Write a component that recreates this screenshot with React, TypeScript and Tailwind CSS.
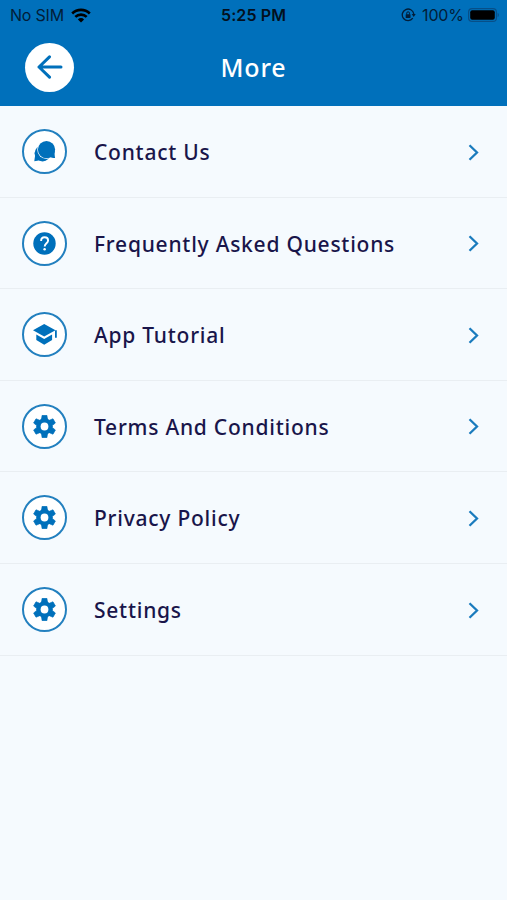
import type { ReactNode } from 'react'

interface MenuItem {
  label: string
  icon: ReactNode
}

function ChatIcon() {
  return (
    <svg width="23" height="23" viewBox="0 0 23 23" fill="currentColor">
      <circle cx="9.600" cy="13.400" r="8" />
      <path d="M1.700 12c1 3-.1 6-.4 9.200 2.200-.1 4-.6 6-1.300z" />
      <circle cx="13.500" cy="9.600" r="9.300" fill="#fff" />
      <circle cx="13.500" cy="9.600" r="8.600" />
      <path d="M22 10c-.7 2.500-.4 5.200.1 7.900-2.200 0-4-.3-6-1.200z" />
    </svg>
  )
}

function HelpIcon() {
  return (
    <svg width="23" height="23" viewBox="0 0 23 23" fill="none">
      <circle cx="11.500" cy="11.500" r="11.200" fill="currentColor" />
      <path d="M8.100 8.900C8.100 6.600 9.500 5.300 11.600 5.300s3.500 1.300 3.500 3.200c0 2.700-3.400 2.900-3.400 6" stroke="#fff" strokeWidth="1.900" />
      <circle cx="11.600" cy="17.200" r="1.250" fill="#fff" />
    </svg>
  )
}

function TutorialIcon() {
  return (
    <svg className="ml-px" width="26" height="23" viewBox="0 0 26 23" fill="currentColor">
      <path d="M12.200 1L23.500 7.300 12.200 13.500 1 7.300z" />
      <path d="M4.300 11.500l7.900 4.500 7.900-4.500v5.600l-7.900 4.600-7.900-4.600z" />
      <path d="M23.500 7.300h1.300v7.400h-1.800V7.600z" />
    </svg>
  )
}

function GearIcon() {
  return (
    <svg width="23" height="23" viewBox="0 0 23 23" fill="currentColor">
      <circle cx="11.500" cy="11.500" r="8.300" />
      {[0, 60, 120].map(angle => (
        <path
          key={angle}
          transform={`rotate(${angle} 11.5 11.5)`}
          d="M9.100 .3h4.800l.6 3.700h-6zM9.100 22.700h4.800l.6-3.700h-6z"
          stroke="currentColor"
          strokeWidth=".6"
          strokeLinejoin="round"
        />
      ))}
      <circle cx="11.500" cy="11.500" r="3.900" fill="#fff" />
    </svg>
  )
}

function WifiIcon() {
  return (
    <svg width="20" height="15" viewBox="0 0 20 15" fill="none" stroke="currentColor" strokeWidth="2.600">
      <path d="M1.200 5.500a12.600 12.600 0 0 1 17.600 0" />
      <path d="M4.300 8.900a8.200 8.200 0 0 1 11.400 0" />
      <path d="M10 14.500l-3.100-3.100a4.400 4.400 0 0 1 6.200 0z" fill="currentColor" stroke="none" />
    </svg>
  )
}

function RotationLockIcon() {
  return (
    <svg width="15" height="14" viewBox="0 0 15 14" fill="none" stroke="currentColor" strokeWidth="1.300">
      <path d="M11.800 10.200A5.800 5.800 0 1 1 12.800 6" />
      <path d="M10.700 6h4l-2 3z" fill="currentColor" stroke="none" />
      <rect x="4.700" y="6.200" width="4.800" height="3.700" rx=".5" fill="currentColor" stroke="none" />
      <path d="M5.700 6.500V5.200a1.400 1.400 0 0 1 2.800 0v1.300" strokeWidth="1" />
    </svg>
  )
}

function BatteryIcon() {
  return (
    <svg width="32" height="14" viewBox="0 0 32 14">
      <rect x=".6" y=".6" width="27.800" height="12.800" rx="3.500" fill="none" stroke="#074f88" strokeWidth="1.200" />
      <rect x="2.200" y="2.200" width="24.600" height="9.600" rx="2" fill="#000" />
      <path d="M29.600 4.800c1.800.7 1.800 3.700 0 4.400z" fill="#074f88" />
    </svg>
  )
}

const menuItems: MenuItem[] = [
  { label: 'Contact Us', icon: <ChatIcon /> },
  { label: 'Frequently Asked Questions', icon: <HelpIcon /> },
  { label: 'App Tutorial', icon: <TutorialIcon /> },
  { label: 'Terms And Conditions', icon: <GearIcon /> },
  { label: 'Privacy Policy', icon: <GearIcon /> },
  { label: 'Settings', icon: <GearIcon /> },
]

function StatusBar() {
  return (
    <div className="grid h-[30px] grid-cols-3 items-center pr-[7px] pl-[10px] font-['Inter','Liberation_Sans',sans-serif] text-[16px] leading-none text-[#021d38]">
      <div className="flex items-center gap-[7px]">
        <span className="tracking-[-0.2px]">No SIM</span>
        <span className="text-black">
          <WifiIcon />
        </span>
      </div>
      <span className="pr-[3px] text-center font-semibold tracking-[0.1px] text-[#03101f]">5:25 PM</span>
      <div className="flex items-center justify-end">
        <RotationLockIcon />
        <span className="ml-[6px] mr-[4px] tracking-[-0.1px]">100%</span>
        <BatteryIcon />
      </div>
    </div>
  )
}

function Header() {
  return (
    <header className="h-[106px] bg-[#0070bb]">
      <StatusBar />
      <div className="grid h-[74px] grid-cols-[49px_1fr_49px] items-center px-[25px]">
        <button className="flex size-[49px] items-center justify-center rounded-full bg-white text-[#0070bb]" aria-label="Back">
          <svg width="26" height="24" viewBox="0 0 26 24" fill="none" stroke="currentColor" strokeWidth="3" strokeLinecap="round" strokeLinejoin="round">
            <path d="M24 12H2M12.500 1.800L2 12l10.500 10.200" />
          </svg>
        </button>
        <h1 className="text-center text-[25px] leading-none font-medium tracking-[0.8px] text-white">More</h1>
      </div>
    </header>
  )
}

export default function App() {
  return (
    <div className="min-h-[900px] w-full bg-[#f5fafe] font-['Noto_Sans',sans-serif]">
      <Header />
      <ul>
        {menuItems.map(item => (
          <li key={item.label} className="flex h-[91.6px] items-center border-b border-[#e9eef2] pt-[0.6px] pr-[28px] pl-[22px]">
            <div className="flex size-[45px] shrink-0 items-center justify-center rounded-full border-2 border-[#2380bf] bg-white text-[#0070bb]">
              {item.icon}
            </div>
            <span className="ml-[27px] flex-1 pt-[2px] text-[21px] leading-none font-medium tracking-[0.76px] whitespace-nowrap text-[#19154a]">
              {item.label}
            </span>
            <svg className="mt-px" width="11" height="17" viewBox="0 0 11 17" fill="none" stroke="#1a7bbd" strokeWidth="2.300">
              <path d="M1.500 1.200L9 8.500l-7.500 7.300" />
            </svg>
          </li>
        ))}
      </ul>
    </div>
  )
}
